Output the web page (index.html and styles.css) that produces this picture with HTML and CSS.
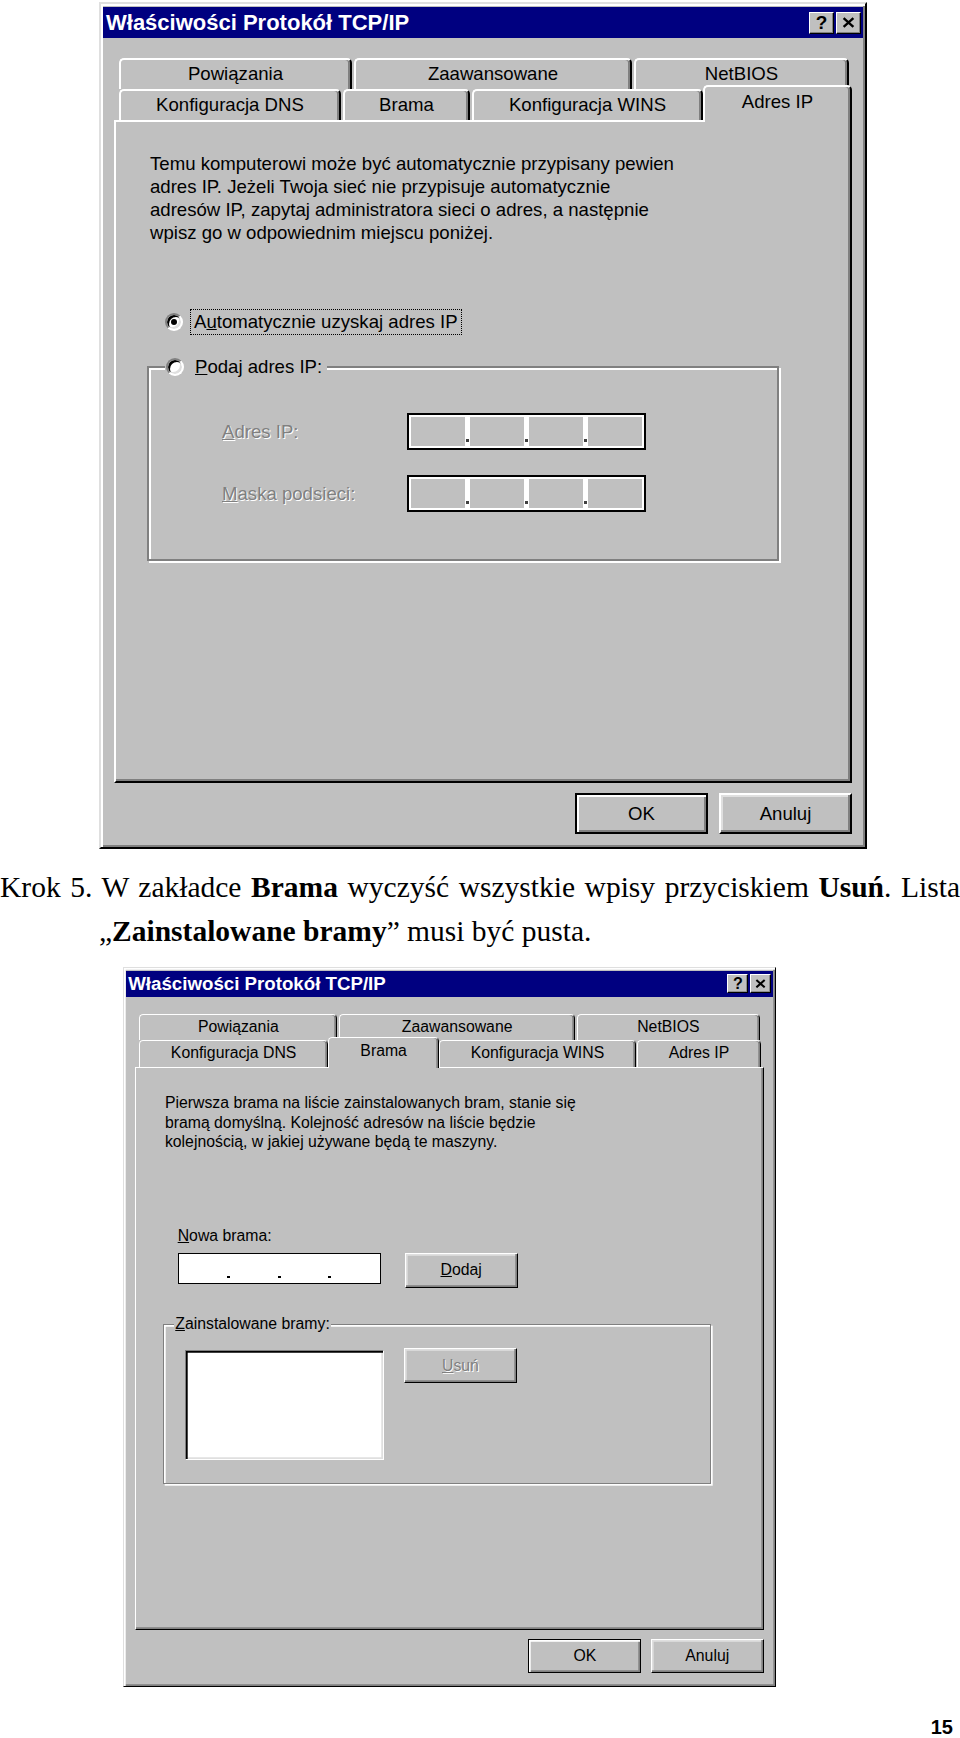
FILE: index.html
```html
<!DOCTYPE html>
<html lang="pl">
<head>
<meta charset="utf-8">
<title>Krok 5 - Brama</title>
<link rel="stylesheet" href="styles.css">
</head>

<body>

<!-- ===== okno 1 : Adres IP ===== -->
<div class="shot shot-1">
  <div class="window">
    <div class="caption">
      <span class="caption-title">Właściwości Protokół TCP/IP</span>
      <span class="cap-btn">?</span>
      <span class="cap-btn"><svg width="13" height="11" viewBox="0 0 12 10"><path d="M1.5 1l9 8M10.5 1l-9 8" stroke="#000" stroke-width="2.2"/></svg></span>
    </div>

    <div class="sheet">
      <div class="tabs">
        <div class="tab-row row-back">
          <div class="tab">Powiązania</div>
          <div class="tab">Zaawansowane</div>
          <div class="tab">NetBIOS</div>
        </div>
        <div class="tab-row row-front">
          <div class="tab">Konfiguracja DNS</div>
          <div class="tab">Brama</div>
          <div class="tab">Konfiguracja WINS</div>
          <div class="tab on">Adres IP</div>
        </div>
      </div>

      <div class="panel">
        <p class="note">Temu komputerowi może być automatycznie przypisany pewien<br>adres IP. Jeżeli Twoja sieć nie przypisuje automatycznie<br>adresów IP, zapytaj administratora sieci o adres, a następnie<br>wpisz go w odpowiednim miejscu poniżej.</p>

        <div class="opt opt-auto">
          <span class="radio checked"></span>
          <span class="focus">A<u>u</u>tomatycznie uzyskaj adres IP</span>
        </div>

        <div class="group group-ip">
          <div class="opt group-cap">
            <span class="radio"></span>
            <span class="lbl"><u>P</u>odaj adres IP:</span>
          </div>
          <div class="ip-grid">
            <span class="off"><u>A</u>dres IP:</span>
            <div class="ipbox is-off">
              <span class="oct"></span><span class="dot"></span><span class="oct"></span><span class="dot"></span><span class="oct"></span><span class="dot"></span><span class="oct"></span>
            </div>
            <span class="off"><u>M</u>aska podsieci:</span>
            <div class="ipbox is-off">
              <span class="oct"></span><span class="dot"></span><span class="oct"></span><span class="dot"></span><span class="oct"></span><span class="dot"></span><span class="oct"></span>
            </div>
          </div>
        </div>
      </div>
    </div>

    <div class="actions">
      <button class="btn default">OK</button>
      <button class="btn">Anuluj</button>
    </div>
  </div>
</div>

<div class="step">
  <p class="step-line first">Krok 5. W zakładce <b>Brama</b> wyczyść wszystkie wpisy przyciskiem <b>Usuń</b>. Lista</p>
  <p class="step-line">„<b>Zainstalowane bramy</b>” musi być pusta.</p>
</div>

<!-- ===== okno 2 : Brama ===== -->
<div class="shot shot-2">
  <div class="window">
    <div class="caption">
      <span class="caption-title">Właściwości Protokół TCP/IP</span>
      <span class="cap-btn">?</span>
      <span class="cap-btn"><svg width="13" height="11" viewBox="0 0 12 10"><path d="M1.5 1l9 8M10.5 1l-9 8" stroke="#000" stroke-width="2.2"/></svg></span>
    </div>

    <div class="sheet">
      <div class="tabs">
        <div class="tab-row row-back">
          <div class="tab">Powiązania</div>
          <div class="tab">Zaawansowane</div>
          <div class="tab">NetBIOS</div>
        </div>
        <div class="tab-row row-front">
          <div class="tab">Konfiguracja DNS</div>
          <div class="tab on">Brama</div>
          <div class="tab">Konfiguracja WINS</div>
          <div class="tab">Adres IP</div>
        </div>
      </div>

      <div class="panel">
        <p class="note">Pierwsza brama na liście zainstalowanych bram, stanie się<br>bramą domyślną. Kolejność adresów na liście będzie<br>kolejnością, w jakiej używane będą te maszyny.</p>

        <div class="field-label"><u>N</u>owa brama:</div>
        <div class="input-row">
          <div class="ipbox">
            <span class="oct"></span><span class="dot"></span><span class="oct"></span><span class="dot"></span><span class="oct"></span><span class="dot"></span><span class="oct"></span>
          </div>
          <button class="btn"><u>D</u>odaj</button>
        </div>

        <div class="group group-gw">
          <div class="group-cap"><u>Z</u>ainstalowane bramy:</div>
          <div class="listbox"></div>
          <button class="btn" disabled><u>U</u>suń</button>
        </div>
      </div>
    </div>

    <div class="actions">
      <button class="btn default">OK</button>
      <button class="btn">Anuluj</button>
    </div>
  </div>
</div>

<div class="page-no">15</div>

</body>
</html>
```

FILE: styles.css
```css
/* ==== リセット & 共通 ==== */
*,*::before,*::after{box-sizing:border-box;margin:0;padding:0}
html,body{width:960px;height:1738px;overflow:hidden;background:#fff}
body{font-family:"Liberation Sans",Arial,sans-serif;color:#000}

.shot-1{padding:2px 0 0 99px}
.shot-2{padding:14px 0 0 123px}
.shot-2 .window{zoom:.85}

/* ==== okno ==== */
.window{
  width:768px;height:847px;
  display:flex;flex-direction:column;
  padding:3px 2px;
  background:#c0c0c0;
  border:2px solid;border-color:#dfdfdf #000 #000 #dfdfdf;
  box-shadow:inset 2px 2px #fff,inset -2px -2px #808080;
  font-size:18.6px;
}

.caption{
  flex:none;height:31px;
  display:flex;align-items:center;gap:2px;
  padding:0 2px 0 3px;
  background:#000080;color:#fff;
}
.caption-title{flex:1;font-weight:bold;font-size:22px;white-space:nowrap}
.cap-btn{
  width:25px;height:22px;
  display:flex;align-items:center;justify-content:center;
  background:#c0c0c0;color:#000;
  font-weight:bold;font-size:19px;
  border:1px solid;border-color:#fff #000 #000 #fff;
  box-shadow:inset -1px -1px #808080;
}

/* ==== zakładki ==== */
.sheet{flex:none;margin:20px 11px 0 11px}
.tabs{height:62px;padding-left:5px}
.tab-row{display:grid;gap:2px;height:31px}
.row-back{grid-template-columns:233px 278px 215px}
.row-front{grid-template-columns:222px 127px 231px 145px}
.tab{
  text-align:center;line-height:28px;white-space:nowrap;
  background:#c0c0c0;
  border:2px solid;border-bottom:0;border-color:#fff #000 #000 #fff;
  border-radius:5px 5px 0 0;
  box-shadow:inset -2px 0 #808080;
}
.tab.on{position:relative;z-index:1;margin:-4px -2px -2px;line-height:30px}

.panel{
  height:663px;
  padding:30px 0 0 31px;
  border:2px solid;border-color:#fff #000 #000 #fff;
  box-shadow:inset -2px -2px #808080;
}
.note{margin-left:3px;line-height:23px;white-space:nowrap}

/* ==== radio / etykiety ==== */
.opt{display:flex;align-items:center;gap:8px;height:26px}
.opt-auto{margin:65px 0 0 18px}
.radio{
  width:18px;height:18px;flex:none;border-radius:50%;
  display:flex;align-items:center;justify-content:center;
  background:#fff;
  border:2px solid;border-color:#808080 #fff #fff #808080;
  box-shadow:inset 2px 2px #000,inset -2px -2px #dfdfdf;
}
.radio.checked::after{content:"";width:6px;height:6px;border-radius:50%;background:#000}
.focus{padding:0 3px;line-height:24px;outline:1px dotted #000}
.lbl{padding:0 3px}
.off{color:#808080;text-shadow:1px 1px #fff}

/* ==== ramka grupy ==== */
.group{
  position:relative;
  border:2px solid #808080;
  box-shadow:inset 2px 2px #fff,2px 2px #fff;
}
.group-cap{position:absolute;background:#c0c0c0}
.group-ip{width:632px;height:195px;margin-top:31px;padding:45px 0 0 73px}
.group-ip .group-cap{top:-14px;left:16px;padding:0 2px 0 1px}

.ip-grid{display:grid;grid-template-columns:185px 239px;row-gap:25px;align-items:center}

/* ==== pole adresu ==== */
.ipbox{
  width:239px;height:37px;flex:none;
  display:flex;padding:2px;
  background:#fff;border:2px solid #000;
}
.oct{flex:1}
.ipbox.is-off .oct{background:#c0c0c0}
.dot{width:5px;display:flex;align-items:flex-end;justify-content:center;padding-bottom:4px}
.dot::after{content:"";width:3px;height:3px;background:#000}
.ipbox.is-off .dot::after{background:#404040}

.field-label{margin:87px 0 0 18px;line-height:23px}
.input-row{display:flex;gap:28px;margin:9px 0 0 18px}

.group-gw{
  width:644px;height:188px;margin:43px 0 0 1px;
  padding:29px 0 0 25px;
  display:flex;gap:24px;align-items:flex-start;
}
.group-gw .group-cap{top:-13px;left:11px;padding:0 2px;line-height:23px}
.group-gw .btn{margin-top:-2px}

.listbox{
  width:233px;height:129px;flex:none;
  background:#fff;
  border:2px solid;border-color:#808080 #fff #fff #808080;
  box-shadow:inset 2px 2px #000,inset -2px -2px #dfdfdf;
}

/* ==== przyciski ==== */
.btn{
  width:133px;height:41px;flex:none;
  font:inherit;color:#000;
  background:#c0c0c0;
  border:2px solid;border-color:#fff #000 #000 #fff;
  box-shadow:inset -2px -2px #808080,inset 2px 2px #dfdfdf;
}
.btn.default{border-color:#000;box-shadow:inset 2px 2px #fff,inset -2px -2px #808080}
.btn:disabled{color:#808080;text-shadow:1px 1px #fff}

.actions{flex:none;display:flex;justify-content:flex-end;gap:11px;margin:10px 11px 0 0}

/* ==== tekst strony ==== */
.step{
  margin-top:16px;
  font:29.5px/44px "Liberation Serif","Times New Roman",serif;
}
.step-line{padding-left:99px;white-space:nowrap}
.step-line.first{padding-left:0;text-align:justify;text-align-last:justify}
.page-no{margin-top:30px;padding-right:7px;text-align:right;font:bold 20px/20px "Liberation Sans",Arial,sans-serif}
```
